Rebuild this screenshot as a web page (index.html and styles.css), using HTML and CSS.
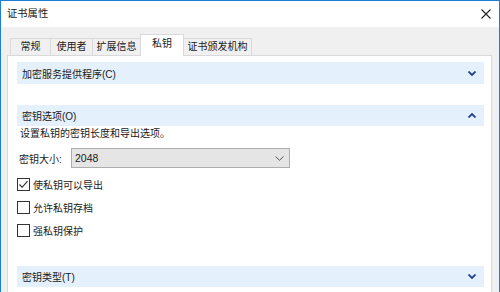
FILE: index.html
```html
<!DOCTYPE html>
<html lang="zh-CN">
<head>
    <meta charset="UTF-8">
    <title>证书属性</title>
    <link rel="stylesheet" href="styles.css">
</head>
<body>
    <div class="window">
        <div class="titlebar">
            <span class="title">证书属性</span>
            <svg class="close" width="10" height="10" viewBox="0 0 10 10">
                <path d="M0.5 0.5 L9.5 9.5 M9.5 0.5 L0.5 9.5" stroke="#222" stroke-width="1.1" fill="none"/>
            </svg>
        </div>

        <div class="dialog">
            <ul class="tabs">
                <li class="tab">常规</li>
                <li class="tab">使用者</li>
                <li class="tab">扩展信息</li>
                <li class="tab active">私钥</li>
                <li class="tab">证书颁发机构</li>
            </ul>

            <div class="panel">
                <!-- Section: provider -->
                <div class="band">
                    <span>加密服务提供程序(C)</span>
                    <svg class="chevron" width="8" height="5" viewBox="0 0 8 5">
                        <path d="M0.5 0.5 L4 4 L7.5 0.5" stroke="#1f3f8f" stroke-width="1.8" fill="none"/>
                    </svg>
                </div>

                <!-- Section: key options -->
                <div class="band band-open">
                    <span>密钥选项(O)</span>
                    <svg class="chevron" width="8" height="5" viewBox="0 0 8 5">
                        <path d="M0.5 4.5 L4 1 L7.5 4.5" stroke="#1f3f8f" stroke-width="1.8" fill="none"/>
                    </svg>
                </div>
                <div class="options">
                    <p class="desc">设置私钥的密钥长度和导出选项。</p>
                    <div class="size-row">
                        <label class="size-label">密钥大小:</label>
                        <div class="select">
                            <span class="select-value">2048</span>
                            <svg width="9" height="5" viewBox="0 0 9 5">
                                <path d="M0.5 0.5 L4.5 4.3 L8.5 0.5" stroke="#555" stroke-width="1" fill="none"/>
                            </svg>
                        </div>
                    </div>
                    <div class="check-row">
                        <span class="box">
                            <svg width="11" height="11" viewBox="0 0 11 11">
                                <path d="M1.5 5.5 L4.2 8.3 L9.5 2.2" stroke="#222" stroke-width="1.1" fill="none"/>
                            </svg>
                        </span>
                        <span>使私钥可以导出</span>
                    </div>
                    <div class="check-row">
                        <span class="box"></span>
                        <span>允许私钥存档</span>
                    </div>
                    <div class="check-row">
                        <span class="box"></span>
                        <span>强私钥保护</span>
                    </div>
                </div>

                <!-- Section: key type -->
                <div class="band band-last">
                    <span>密钥类型(T)</span>
                    <svg class="chevron" width="8" height="5" viewBox="0 0 8 5">
                        <path d="M0.5 0.5 L4 4 L7.5 0.5" stroke="#1f3f8f" stroke-width="1.8" fill="none"/>
                    </svg>
                </div>
            </div>
        </div>
    </div>
</body>
</html>
```

FILE: styles.css
```css
/* Reset */
* {
    margin: 0;
    padding: 0;
    box-sizing: border-box;
}

body {
    font-family: "Liberation Sans", "Noto Sans CJK SC", sans-serif;
    font-size: 10px;
    color: #1a1a1a;
    background-color: #ffffff;
}

/* Window frame */
.window {
    width: 500px;
    height: 292px;
    border: 1px solid #1c7ed6;
    border-bottom: none;
    display: flex;
    flex-direction: column;
    overflow: hidden;
}

.titlebar {
    height: 26px;
    display: flex;
    align-items: center;
    justify-content: space-between;
    padding: 0 8px 0 6px;
    background-color: #ffffff;
}

.title {
    font-size: 10.3px;
    line-height: 16px;
}

/* Dialog body */
.dialog {
    flex: 1;
    background-color: #f0f0f0;
    padding: 6px 7px 0 6px;
    display: flex;
    flex-direction: column;
}

.tabs {
    list-style: none;
    display: flex;
    align-items: flex-end;
    padding-left: 3px;
    height: 22px;
}

.tab {
    height: 17px;
    line-height: 15px;
    text-align: center;
    white-space: nowrap;
    border: 1px solid #d9d9d9;
    border-bottom: none;
    border-right: none;
    background-color: #f0f0f0;
}

.tab:nth-child(1) { width: 40px; }
.tab:nth-child(2) { width: 42px; }
.tab:nth-child(3) { width: 48px; }
.tab:nth-child(5) {
    width: 68px;
    border-left: none;
    border-right: 1px solid #d9d9d9;
}

.tab.active {
    width: 44px;
    height: 22px;
    line-height: 18px;
    background-color: #ffffff;
    border: 1px solid #d9d9d9;
    border-bottom: none;
    margin-bottom: -1px;
    position: relative;
    z-index: 1;
}

/* Tab page */
.panel {
    flex: 1;
    background-color: #ffffff;
    border: 1px solid #d9d9d9;
    border-bottom: none;
    padding: 6px 7px 0 9px;
}

.band {
    height: 22px;
    display: flex;
    align-items: center;
    justify-content: space-between;
    padding: 0 8px 0 5px;
    background-color: #e4f0fc;
}

.band-open {
    margin-top: 21px;
    height: 21px;
}

.band-last {
    margin-top: 24px;
    height: 21px;
}

.desc {
    line-height: 16px;
    padding-left: 3px;
}

.size-row {
    display: flex;
    align-items: center;
    margin-top: 6px;
    padding-left: 2px;
}

.size-label {
    width: 52px;
}

.select {
    width: 219px;
    height: 20px;
    background-color: #e5e5e5;
    border: 1px solid #adadad;
    display: flex;
    align-items: center;
    justify-content: space-between;
    padding: 0 5px 0 3px;
}

.select-value {
    font-size: 10.5px;
}

.check-row {
    height: 23px;
    display: flex;
    align-items: center;
    gap: 3px;
}

.size-row + .check-row {
    margin-top: 5px;
}

.box {
    width: 13px;
    height: 13px;
    border: 1px solid #333333;
    background-color: #ffffff;
    display: flex;
    align-items: center;
    justify-content: center;
}
```
